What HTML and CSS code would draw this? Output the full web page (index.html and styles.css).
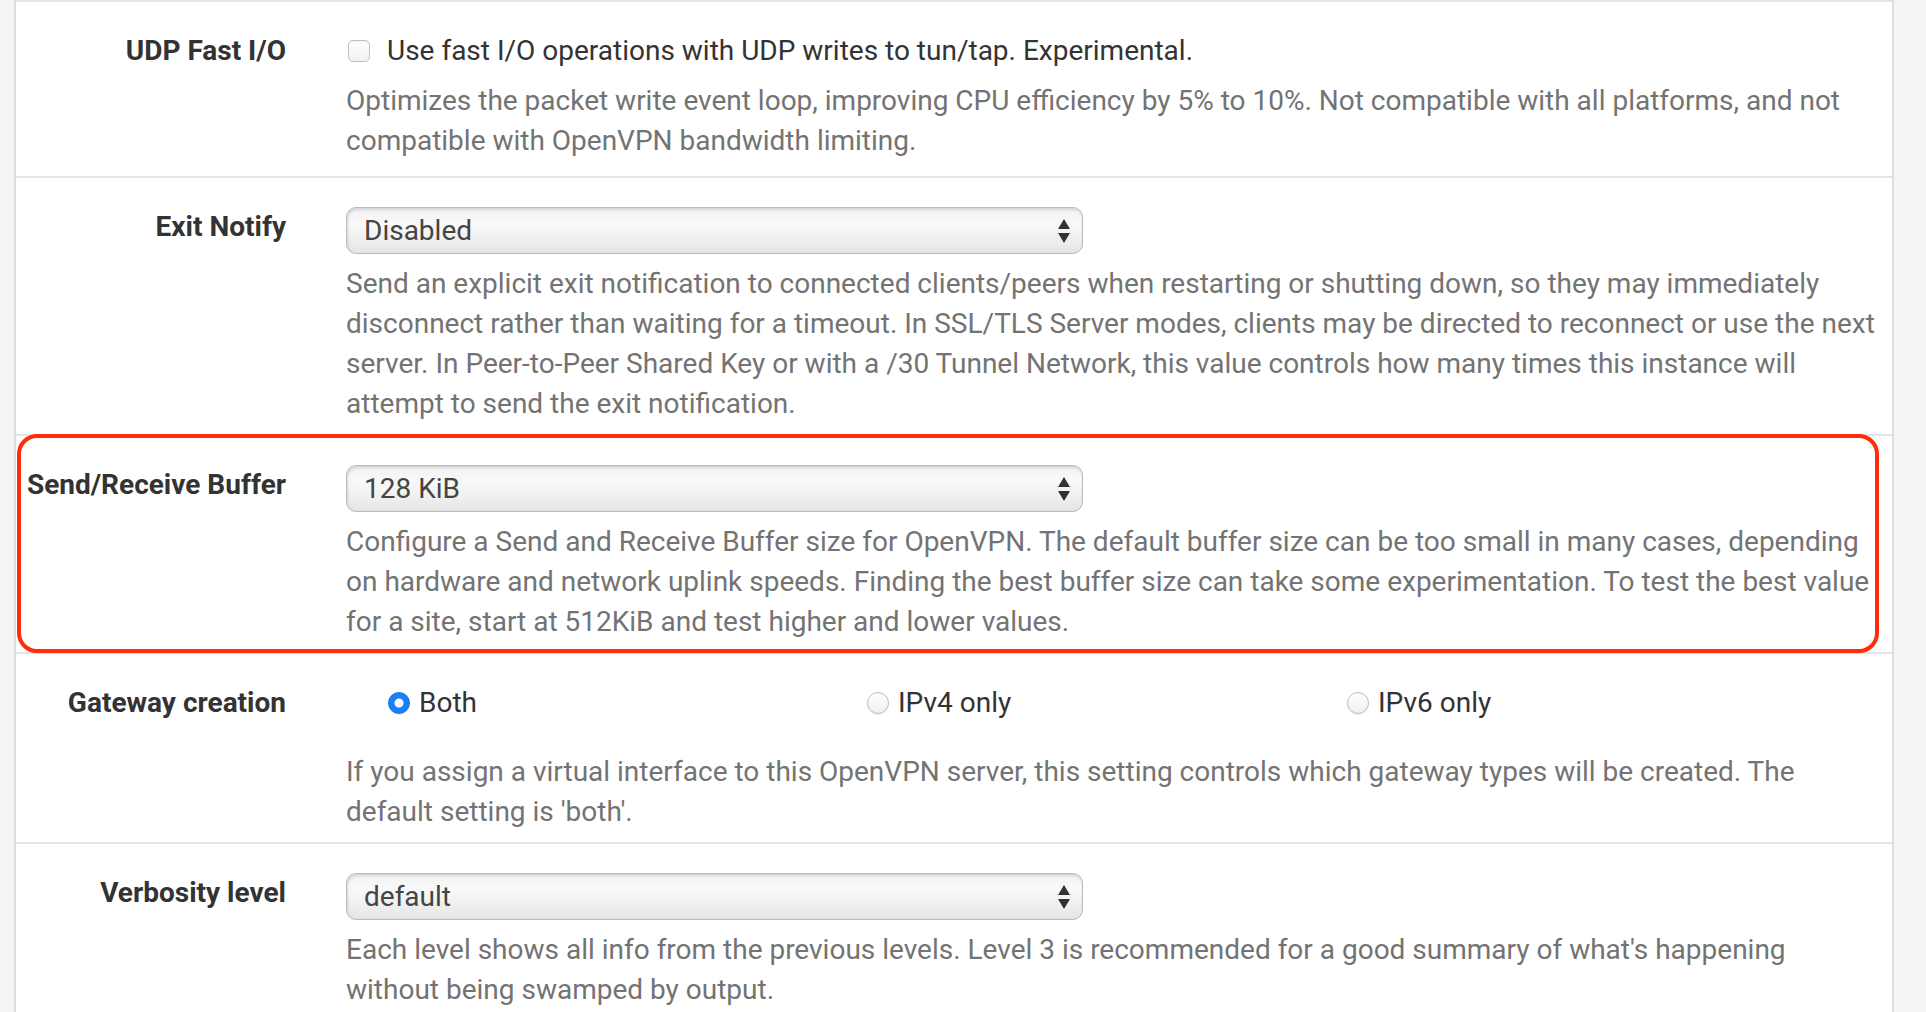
FILE: index.html
```html
<!DOCTYPE html>
<html lang="en">
<head>
<meta charset="UTF-8" />
<meta name="viewport" content="width=device-width, initial-scale=1" />
<title>OpenVPN Server - Advanced Configuration</title>
<link rel="stylesheet" href="styles.css">
</head>
<body>

<div class="panel">

  <div class="form-row row-check">
    <label class="form-label" for="udp-fast-io">UDP Fast I/O</label>
    <div class="form-field">
      <label class="check-line">
        <input type="checkbox" id="udp-fast-io" />
        <span>Use fast I/O operations with UDP writes to tun/tap. Experimental.</span>
      </label>
      <p class="help">Optimizes the packet write event loop, improving CPU efficiency by 5% to 10%. Not compatible with all platforms, and not compatible with OpenVPN bandwidth limiting.</p>
    </div>
  </div>

  <div class="form-row">
    <label class="form-label" for="exit-notify">Exit Notify</label>
    <div class="form-field">
      <div class="select-wrap">
        <select id="exit-notify">
          <option>Disabled</option>
        </select>
        <svg class="select-arrows" viewBox="0 0 14 26" width="14" height="26"><polygon points="7,1 13,11 1,11" /><polygon points="1,15 13,15 7,25" /></svg>
      </div>
      <p class="help">Send an explicit exit notification to connected clients/peers when restarting or shutting down, so they may immediately disconnect rather than waiting for a timeout. In SSL/TLS Server modes, clients may be directed to reconnect or use the next server. In Peer-to-Peer Shared Key or with a /30 Tunnel Network, this value controls how many times this instance will attempt to send the exit notification.</p>
    </div>
  </div>

  <!-- markierte Zeile -->
  <div class="form-row highlighted">
    <label class="form-label" for="sndrcvbuf">Send/Receive Buffer</label>
    <div class="form-field">
      <div class="select-wrap">
        <select id="sndrcvbuf">
          <option>128 KiB</option>
        </select>
        <svg class="select-arrows" viewBox="0 0 14 26" width="14" height="26"><polygon points="7,1 13,11 1,11" /><polygon points="1,15 13,15 7,25" /></svg>
      </div>
      <p class="help">Configure a Send and Receive Buffer size for OpenVPN. The default buffer size can be too small in many cases, depending on hardware and network uplink speeds. Finding the best buffer size can take some experimentation. To test the best value for a site, start at 512KiB and test higher and lower values.</p>
    </div>
  </div>

  <div class="form-row">
    <span class="form-label">Gateway creation</span>
    <div class="form-field">
      <div class="radio-group">
        <label class="radio-line"><input type="radio" name="gwcreate" value="both" checked /> Both</label>
        <label class="radio-line"><input type="radio" name="gwcreate" value="v4only" /> IPv4 only</label>
        <label class="radio-line"><input type="radio" name="gwcreate" value="v6only" /> IPv6 only</label>
      </div>
      <p class="help">If you assign a virtual interface to this OpenVPN server, this setting controls which gateway types will be created. The default setting is 'both'.</p>
    </div>
  </div>

  <div class="form-row">
    <label class="form-label" for="verb">Verbosity level</label>
    <div class="form-field">
      <div class="select-wrap">
        <select id="verb">
          <option>default</option>
        </select>
        <svg class="select-arrows" viewBox="0 0 14 26" width="14" height="26"><polygon points="7,1 13,11 1,11" /><polygon points="1,15 13,15 7,25" /></svg>
      </div>
      <p class="help">Each level shows all info from the previous levels. Level 3 is recommended for a good summary of what's happening without being swamped by output.</p>
    </div>
  </div>

</div>

</body>
</html>
```

FILE: styles.css
```css
:root {
  --page-bg: #f5f5f5;
  --panel-border: #dddddd;
  --row-border: #e4e4e4;
  --text-color: #333333;
  --help-color: #737373;
  --mark-color: #ff2d0a; /* rote Markierung */
  --radio-blue: #1b7ff6;
}
html, body {
  margin: 0;
  height: 100%;
}
body {
  background-color: var(--page-bg);
  color: var(--text-color);
  font-family: Roboto, "Liberation Sans", sans-serif;
  font-size: 28px;
  line-height: 40px;
  overflow: hidden;
}
.panel {
  margin: 0 32px 0 14px;
  min-height: 100%;
  background: #fff;
  border-left: 2px solid var(--panel-border);
  border-right: 2px solid var(--panel-border);
}
.form-row {
  display: grid;
  grid-template-columns: 300px 1fr;
  border-top: 2px solid var(--row-border);
  padding: 29px 0 10px;
}
.form-label {
  padding-right: 30px;
  text-align: right;
  font-weight: bold;
  color: var(--text-color);
}
.form-field {
  padding: 0 14px 0 30px;
}
.help {
  margin: 10px 0 0;
  color: var(--help-color);
}
.row-check .help {
  margin-bottom: 5px;
}

/* Checkbox */
.check-line {
  display: flex;
  align-items: center;
  gap: 17px;
  padding-left: 2px;
}
.check-line input {
  appearance: none;
  margin: 0;
  width: 22px;
  height: 22px;
  border: 1px solid #c0c0c0;
  border-radius: 5px;
  background: linear-gradient(#ffffff, #f1f1f1);
  box-shadow: inset 0 1px 1px rgba(0, 0, 0, 0.06);
}

/* Select */
.select-wrap {
  position: relative;
  width: 737px;
}
.select-wrap select {
  appearance: none;
  display: block;
  width: 100%;
  height: 47px;
  margin: 0;
  padding: 0 40px 0 17px;
  font-family: inherit;
  font-size: 28px;
  color: #444;
  border: 1px solid #bababa;
  border-radius: 10px;
  background: linear-gradient(#f2f2f2 0%, #f9f9f9 35%, #ececec 80%, #e4e4e4 100%);
  box-shadow: inset 1px 2px 3px rgba(0, 0, 0, 0.13);
}
.select-arrows {
  position: absolute;
  right: 12px;
  top: 11px;
  fill: #333;
  pointer-events: none;
}

/* Radios */
.radio-group {
  display: grid;
  grid-template-columns: 479px 480px 1fr;
  padding-left: 42px;
  padding-bottom: 19px;
}
.radio-line {
  display: flex;
  align-items: center;
  gap: 9px;
}
.radio-line input {
  appearance: none;
  margin: 0;
  width: 22px;
  height: 22px;
  border: 1px solid #bcbcbc;
  border-radius: 50%;
  background: linear-gradient(#ffffff, #f0f0f0);
  box-shadow: 0 1px 1px rgba(0, 0, 0, 0.06);
}
.radio-line input:checked {
  border-color: #1670e4;
  background: radial-gradient(circle, #fff 0 4px, var(--radio-blue) 5px);
}

/* rote Markierung über der Zeile */
.highlighted {
  position: relative;
}
.highlighted::after {
  content: "";
  position: absolute;
  top: -2px;
  left: 1px;
  right: 13px;
  bottom: -1px;
  border: 4px solid var(--mark-color);
  border-radius: 20px;
  pointer-events: none;
}
```
